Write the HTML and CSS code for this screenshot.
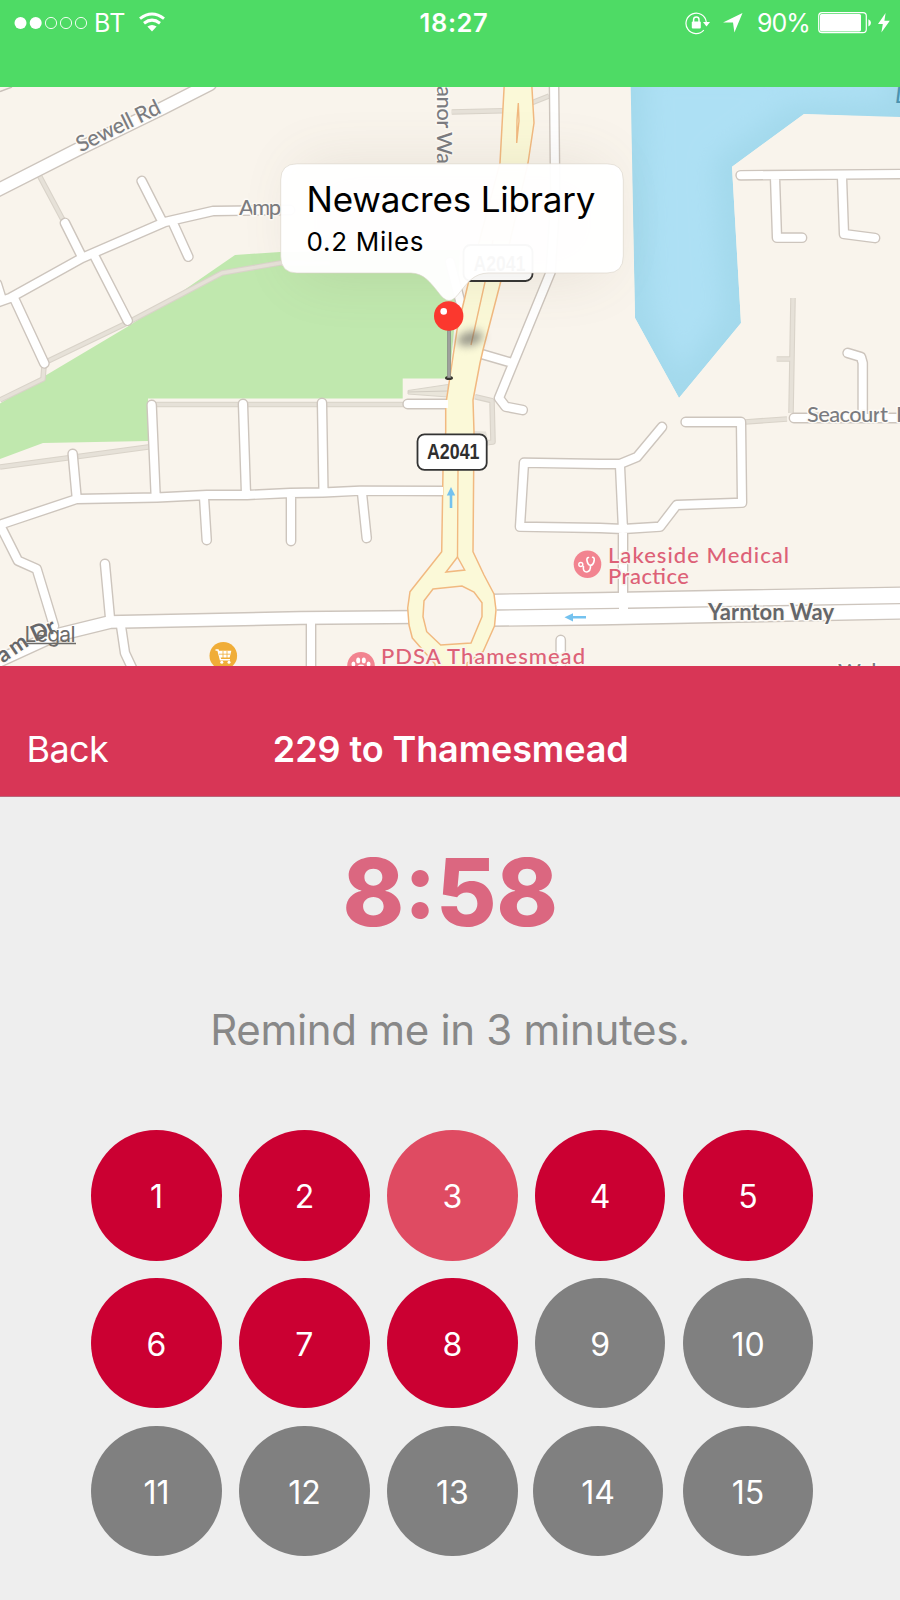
FILE: index.html
```
<!DOCTYPE html>
<html lang="en">
<head>
<meta charset="utf-8">
<title>229 to Thamesmead</title>
<link rel="stylesheet" href="styles.css">
</head>
<body>
<header class="status">
  <div class="status-left">
    <svg class="signal" width="74" height="14" viewBox="0 0 74 14"><circle cx="6.5" cy="7" r="6" class="dot-on"/><circle cx="21.7" cy="7" r="6" class="dot-on"/><circle cx="37" cy="7" r="5.6" class="dot-off"/><circle cx="52" cy="7" r="5.6" class="dot-off"/><circle cx="67" cy="7" r="5.6" class="dot-off"/></svg>
    <span class="carrier">BT</span>
    <svg class="wifi" width="28" height="20" viewBox="0 0 28 20"><path d="M2 6.6Q14 -2.6 26 6.6" class="arc"/><path d="M6 11.2Q14 5 22 11.2" class="arc"/><path d="M9.4 14.6Q14 11.2 18.6 14.6L14 19.4Z" fill="#fff"/></svg>
  </div>
  <span class="clock">18:27</span>
  <div class="status-right">
    <svg width="26" height="24" viewBox="0 0 26 24"><path d="M18.8 19.2A10.2 10.2 0 1 1 21.3 11" class="thin"/><path d="M18 11H25L21.5 15.4Z" fill="#fff"/><rect x="6.8" y="10.5" width="9" height="7" rx="1" fill="#fff"/><path d="M8.6 11V8.6a2.7 2.7 0 0 1 5.4 0V11" class="shackle"/></svg>
    <svg class="locate" width="20" height="20" viewBox="0 0 20 20"><path d="M0 9.4L19.5 0L11.4 19.4L10 9.6Z" fill="#fff"/></svg>
    <span class="percent">90%</span>
    <svg class="battery" width="54" height="22" viewBox="0 0 54 22"><rect x=".7" y=".7" width="47.6" height="20" rx="3.4" class="thin"/><rect x="2" y="2" width="41" height="17.4" rx="1.6" fill="#fff"/><path d="M50.4 7.2Q53 8.3 53 10.8T50.4 14.4Z" fill="#fff"/></svg>
    <svg class="bolt" width="12" height="20" viewBox="0 0 12 20"><path d="M7.6 0L0 11H4.8L3.4 19.5L11.8 7.7H6.4Z" fill="#fff"/></svg>
  </div>
</header>

<svg class="map" width="900" height="579" viewBox="0 87 900 579">
  <defs>
    <filter id="blur" x="-50%" y="-80%" width="200%" height="260%"><feGaussianBlur stdDeviation="4"/></filter>
    <filter id="soft" x="-30%" y="-60%" width="160%" height="240%"><feGaussianBlur stdDeviation="30"/></filter>
    <filter id="edge" x="-10%" y="-10%" width="120%" height="120%"><feGaussianBlur stdDeviation="12"/></filter>
    <clipPath id="lake"><path d="M630.7 87L635 318L679 398L741 323L732 166.7L804 114L900 117V87Z"/></clipPath>
    <g id="streets">
      <path d="M65 223L81 255M95 257L127.7 320.7M-4 303L10 298L82 258L165 222L213 211L290 210M141.7 181L163 223M173 223L188.3 256.7M14 298L44.3 363.3M-3 284L2 300"/>
      <path d="M72.7 454L76.7 498M-4 526L76.7 499L157 497.5L207 495L247 495L290 493L323 492.5L360 490.7L446 491M151.7 405L155.7 497M243 404L246 494M204 497L206.7 540M291 495V541M322 403L323.5 492M362 493L366.7 538M0 525L18 560.7L36.7 569L54 626M105 564L110 618M121 626L125 653L133 670M311 622V675M407.7 404H450"/>
      <path d="M554 80L555.3 200L550.7 272L499 398L505.7 406.7L522.7 410M478 353L509 362M560.7 640V670M450 262L464 316"/>
      <path d="M740.7 175.3L905 174M775 177L777 237.7H802M842 177L844 234L875 238M847.7 353L861 357L862.7 363V418M794 418H905"/>
      <path d="M685.7 422H741L742 502.7L676.7 505L660 526.7L623 529L600 528L520 526.7L524 462.7L600 464H620L637 457L662 427M620 466L623 530V600"/>
    </g>
    <g id="avenues">
      <path d="M-5 191.5L76.7 150L163 108L210 84"/>
      <path d="M-6 663L53 636L110 622L300 618L415 617"/>
    </g>
  </defs>

  <rect y="87" width="900" height="579" fill="#f9f4ec"/>
  <path class="park" d="M0 403.5L43 377L127 327L177 295L235 255L280 252L460 250L457 300L450 372L446 378.5H402.7V398.5H148V441L43 443L0 459Z"/>
  <g clip-path="url(#lake)">
    <path d="M630 86H901V118L804 114L732 166.7L741 323L679 398L635 318Z" fill="#a3d9ec"/>
    <path d="M645 70H890V100L790 104L714 160L722 315L679 375L651 310Z" fill="#ade0f4" filter="url(#edge)"/>
  </g>

  <path class="path-case" d="M39 175L63 220M44 363L127 323L222 273L280 263H330M44 366L43 379L0 400M0 467L67 458L150 446.7M152 404.5H407M451.7 112L503 110.7M530 103.5L549 96M793 298L791 413M776.7 359H793M745 422L787 419M475 396.7L492 400.7L493 442L484 443"/>
  <path class="path-fill" d="M39 175L63 220M44 363L127 323L222 273L280 263H330M44 366L43 379L0 400M0 467L67 458L150 446.7M152 404.5H407M451.7 112L503 110.7M530 103.5L549 96M793 298L791 413M776.7 359H793M745 422L787 419M475 396.7L492 400.7L493 442L484 443"/>
  <path d="M408 390.5L448 384.5V397L408 394Z" fill="#e9e5da" stroke="#d9d4ca"/>
  <path d="M408 392L448 391" stroke="#d2cdc3"/>
  <path d="M474 431L486 431.5L489 445H474Z" fill="#e6e2da"/>

  <path d="M0 91.5L12 87" stroke="#c9c1b9" stroke-width="1.4"/>
  <use href="#streets" class="street-case"/>
  <use href="#avenues" class="avenue-case"/>
  <path d="M490 594L600 592.7L900 587V619L600 625L490 626Z" fill="#fff"/>
  <path d="M490 594.2L600 592.5L905 587M490 626.3L600 625L905 619" class="line"/>
  <use href="#streets" class="street-fill"/>
  <use href="#avenues" class="avenue-fill"/>
  <path d="M497 610L619 608.4M628 608.2L900 603.6" class="line"/>

  <path class="trunk" d="M504.5 80L500 163L469 280L465 297L457 330L448 390L445.7 405V432L443 470L441.7 551.7L410 591.7L407.7 608L409 625L412.3 638L435 664V675H467V663L483 651.7L494.5 626L496 610L494 594L484 575L473 551.7L474 432L473 400L480 363L483 350L500.7 281.7L528 163L534 123L531.5 80Z"/>
  <path class="trunk-line" d="M518.3 103L519 121L516.7 143L517 120ZM493 240L485 282L471 345M458 470L457.5 557"/>
  <path class="island" d="M457.5 557L446 572L464.7 570Z"/>
  <path class="island" d="M433 589L462 586L474 592L482 602.7V616.7L471 643L440.7 645L426.7 631.7L423 616.7L424 600.7Z"/>
  <path d="M448 404H443M443 491H440" stroke="#fff" stroke-width="8"/>
  <path d="M451 508V493M586 617.3H571" stroke="#74c2ef" stroke-width="2.6"/>
  <path d="M446.8 495.5L451 487L455.2 495.5ZM573 613.2L564.5 617.3L573 621.5Z" fill="#74c2ef"/>

  <g class="shield"><rect x="463.5" y="245" width="69" height="36" rx="7"/><text x="473.5" y="270.5" textLength="52" lengthAdjust="spacingAndGlyphs">A2041</text></g>
  <g class="shield"><rect x="417.5" y="434.3" width="69.2" height="35.6" rx="7"/><text x="427" y="459" textLength="52.5" lengthAdjust="spacingAndGlyphs">A2041</text></g>

  <g class="label">
    <text transform="translate(80.5 152.5) rotate(-26)" textLength="91">Sewell Rd</text>
    <text x="239" y="215" textLength="42">Amp</text>
    <text transform="translate(436.5 86) rotate(90)" textLength="78">anor Wa</text>
    <text x="807" y="422.3" textLength="81">Seacourt</text>
    <text x="896" y="422.3">R</text>
    <text x="838" y="679">Wel</text>
  </g>
  <g class="label label-strong">
    <text x="708" y="619.5" textLength="126">Yarnton Way</text>
    <text transform="translate(-10 672) rotate(-34)" textLength="48">ham</text>
    <text transform="translate(35 642) rotate(-25)">Dr</text>
  </g>
  <text x="895" y="103" class="water-label">D</text>
  <g class="label label-poi">
    <text x="608" y="562.5" textLength="181">Lakeside Medical</text>
    <text x="608" y="584" textLength="81">Practice</text>
    <text x="381" y="663.5" textLength="204">PDSA Thamesmead</text>
  </g>
  <text x="24.5" y="641.5" textLength="51" class="legal">Legal</text>
  <path d="M25 643.6H76" stroke="#6d6b69" stroke-width="1.5"/>

  <circle cx="223.3" cy="655.7" r="13.8" fill="#f0ad38"/>
  <path d="M215.5 650H218L220.5 659.8H230" stroke="#fff" stroke-width="1.5" fill="none"/>
  <path d="M218.3 650.8H231.3L229.6 657.6H220Z" fill="#fff"/>
  <path d="M219 654.2H230M223 651V658M227 651V658" stroke="#f0ad38" stroke-width=".8"/>
  <circle cx="221.8" cy="662.3" r="1.5" fill="#fff"/><circle cx="229" cy="662.3" r="1.5" fill="#fff"/>
  <circle cx="587.5" cy="564.3" r="13.8" fill="#f28490"/>
  <path d="M588.5 557.5Q586.5 557.6 587 560.5Q587.8 565.3 590.5 565.3Q593.4 565.3 594.2 560.5Q594.6 557.4 592.6 557.3M590.5 565.3Q590.8 571.5 586.8 572Q582.8 572 583.4 566.5" fill="none" stroke="#fff" stroke-width="1.6" stroke-linecap="round"/>
  <circle cx="580.8" cy="564.5" r="2" fill="none" stroke="#fff" stroke-width="1.4"/>
  <circle cx="361" cy="665.7" r="13.8" fill="#f28490"/>
  <g fill="#fff"><ellipse cx="353.4" cy="664" rx="1.9" ry="2.6"/><ellipse cx="358.2" cy="660.4" rx="2" ry="2.9"/><ellipse cx="363.8" cy="660.4" rx="2" ry="2.9"/><ellipse cx="368.6" cy="664" rx="1.9" ry="2.6"/><ellipse cx="361" cy="669" rx="5" ry="4.4"/></g>

  <rect x="300" y="165" width="305" height="110" fill="#6b5a40" opacity=".13" filter="url(#soft)"/>
  <ellipse cx="470" cy="338.5" rx="13" ry="7" fill="#555" opacity=".58" filter="url(#blur)" transform="rotate(-15 470 338)"/>
  <path class="callout" d="M297 163.8H607Q623.3 163.8 623.3 180V256Q623.3 273 607 273H488C474 273.5 468 282 460 292Q454 300.5 449 300.5Q444 300.5 438 292C430 282 424 273.5 411 273H297Q280.7 273 280.7 256V180Q280.7 163.8 297 163.8Z"/>
  <text x="306.5" y="211.7" textLength="289" class="callout-title">Newacres Library</text>
  <text x="306.5" y="250.7" textLength="117" class="callout-sub">0.2 Miles</text>
  <ellipse cx="449" cy="378" rx="4" ry="2" fill="#37352f"/>
  <path d="M449 328V378" stroke="#858783" stroke-width="3.6"/>
  <path d="M449 331V377" stroke="#aaaca8" stroke-width="1.4"/>
  <circle cx="448.7" cy="316" r="14.7" fill="#fb382e"/>
  <circle cx="443.7" cy="311.4" r="3.3" fill="#fff"/>
</svg>

<nav class="navbar">
  <a class="back">Back</a>
  <h1 class="title">229 to Thamesmead</h1>
</nav>

<main class="panel">
  <div class="countdown">8<span class="colon">:</span>58</div>
  <p class="remind">Remind me in 3 minutes.</p>
  <div class="minutes">
    <button class="minute">1</button><button class="minute">2</button><button class="minute selected">3</button><button class="minute">4</button><button class="minute">5</button>
    <button class="minute">6</button><button class="minute">7</button><button class="minute">8</button><button class="minute off">9</button><button class="minute off">10</button>
    <button class="minute off">11</button><button class="minute off">12</button><button class="minute off">13</button><button class="minute off nudge">14</button><button class="minute off">15</button>
  </div>
</main>
</body>
</html>
```
FILE: styles.css
```
* { box-sizing: border-box; }
body { margin: 0; width: 900px; height: 1600px; overflow: hidden; background: #eeeeee; font-family: Inter, "Liberation Sans", sans-serif; }
svg { display: block; flex: none; }

.status { height: 87px; background: #4edb65; color: #fff; display: grid; grid-template-columns: 1fr auto 1fr; align-items: start; padding: 0 10px 0 14px; font-size: 25px; line-height: 46px; }
.status-left, .status-right { display: flex; align-items: center; height: 46px; }
.status-right { justify-content: flex-end; }
.carrier { margin-left: 6px; letter-spacing: 0.3px; }
.wifi { margin-left: 12px; margin-top: -3px; }
.clock { font-weight: 600; font-size: 25.5px; letter-spacing: 0.6px; padding-left: 4px; }
.locate { margin-left: 12px; }
.percent { margin-left: 14px; letter-spacing: -0.9px; }
.battery { margin-left: 8px; }
.bolt { margin-left: 6px; }
.dot-on { fill: #fff; }
.dot-off { fill: none; stroke: #fff; stroke-width: 0.9; }
.arc { fill: none; stroke: #fff; stroke-width: 3; }
.thin { fill: none; stroke: #fff; stroke-width: 1.2; }
.shackle { fill: none; stroke: #fff; stroke-width: 1.5; }

.park { fill: #c0e8ae; }
.path-case { fill: none; stroke: #d9d3c9; stroke-width: 5.6; stroke-linejoin: round; }
.path-fill { fill: none; stroke: #e6e1d8; stroke-width: 3.4; stroke-linejoin: round; }
.street-case, .street-fill, .avenue-case, .avenue-fill { fill: none; stroke-linecap: round; stroke-linejoin: round; }
.street-case { stroke: #cdc5bd; stroke-width: 10.8; }
.street-fill { stroke: #fff; stroke-width: 8; }
.avenue-case { stroke: #cdc5bd; stroke-width: 14.4; }
.avenue-fill { stroke: #fff; stroke-width: 11.6; }
.line { fill: none; stroke: #cdc5bd; stroke-width: 1.4; }
.trunk { fill: #fbf9d8; stroke: #f1b980; stroke-width: 1.5; stroke-linejoin: round; }
.trunk-line { fill: none; stroke: #f1b980; stroke-width: 1.4; }
.island { fill: #f9f4ec; stroke: #f1b980; stroke-width: 1.5; }
.shield rect { fill: #fff; stroke: #333; stroke-width: 1.8; }
.shield text { font: bold 21.5px "Liberation Sans", Arial, sans-serif; fill: #2e2e2e; }
.label text { font: 500 22px Lato, sans-serif; fill: #7b7c80; stroke: #fdfaf5; stroke-width: 3px; paint-order: stroke; stroke-linejoin: round; }
.label-strong text { font-weight: 700; fill: #66676a; }
.label-poi text { fill: #dd6177; stroke: #f9f4ec; }
.water-label { font: italic 24px Lato, sans-serif; fill: #4b93b0; }
.legal { font: 21px Inter, sans-serif; fill: #6d6b69; }
.callout { fill: #fff; fill-opacity: 0.965; stroke: #d9d2c6; stroke-width: 0.6; }
.callout-title { font: 35px Inter, sans-serif; fill: #000; }
.callout-sub { font: 26px Inter, sans-serif; fill: #000; }

.navbar { height: 130.5px; background: #d83656; border-bottom: 1px solid #b9667a; color: #fff; display: grid; grid-template-columns: 1fr auto 1fr; align-items: center; padding: 36px 25px 0 26.5px; }
.back { font-size: 36px; letter-spacing: -0.6px; }
.title { margin: 0; font-size: 36px; font-weight: 600; letter-spacing: -0.1px; }

.panel { display: flex; flex-direction: column; align-items: center; }
.countdown { margin-top: 39px; height: 112px; line-height: 112px; font-size: 93px; font-weight: 800; letter-spacing: -0.5px; color: #db6780; }
.colon { position: relative; top: -8px; }
.remind { margin: 52px 0 0; height: 60px; line-height: 60px; font-size: 42px; letter-spacing: -0.3px; color: #888; }
.minutes { margin-top: 70.5px; margin-left: 4.6px; display: grid; grid-template-columns: repeat(5, 130.6px); grid-auto-rows: 130.6px; gap: 17.3px; }
.minute { border: 0; padding: 2px 0 0; border-radius: 50%; background: #cb0032; color: #fff; font: 32px Inter, sans-serif; }
.selected { background: #df4b62; }
.off { background: #808080; }
.nudge { transform: translateX(-2px); }
```
